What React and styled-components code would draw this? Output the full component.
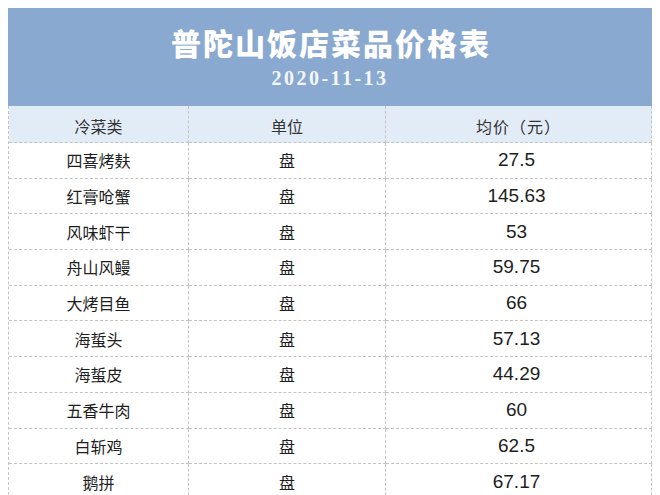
import styled, { createGlobalStyle } from "styled-components";

const GlobalStyle = createGlobalStyle`
  body {
    margin: 8px;
    background: #ffffff;
    font-family: "Noto Sans CJK SC", "Liberation Sans", sans-serif;
  }
`;

const Sheet = styled.section`
  width: 644px;
`;

const Banner = styled.header`
  height: 98px;
  background-color: #8aa9d0;
  display: flex;
  flex-direction: column;
  align-items: center;
  justify-content: flex-start;
  color: #ffffff;
  box-sizing: border-box;
  padding-top: 15px;
`;

const Title = styled.h1`
  margin: 0;
  font-family: "Noto Sans CJK SC", sans-serif;
  font-weight: 900;
  font-size: 30px;
  line-height: 38px;
  letter-spacing: 2px;
  padding-left: 2px;
`;

const DateLine = styled.div`
  margin-top: 4px;
  font-family: "Liberation Serif", serif;
  font-weight: bold;
  font-size: 20px;
  line-height: 26px;
  letter-spacing: 2.5px;
  color: #f4f7fb;
`;

const Grid = styled.div`
  display: grid;
  grid-template-columns: 180px 197px 1fr;
  border-left: 1px dashed #c4c4c4;
`;

const Cell = styled.div`
  box-sizing: border-box;
  height: ${(p) => (p.$head ? "37px" : "35.7px")};
  display: flex;
  align-items: center;
  justify-content: center;
  border-right: 1px dashed #c4c4c4;
  border-bottom: 1px dashed #c4c4c4;
  background-color: ${(p) => (p.$head ? "#e2ecf7" : "#ffffff")};
  color: ${(p) => (p.$head ? "#333333" : "#1e1e1e")};
  font-size: 16px;
  padding-top: ${(p) => (p.$head ? "3px" : "0")};
`;

const Price = styled(Cell)`
  font-family: "Liberation Sans", Arial, sans-serif;
  font-size: 19px;
  padding-right: 4px;
`;

const HeadPrice = styled(Cell)`
  letter-spacing: 1px;
`;

const dishes = [
  ["四喜烤麸", "27.5"],
  ["红膏呛蟹", "145.63"],
  ["风味虾干", "53"],
  ["舟山风鳗", "59.75"],
  ["大烤目鱼", "66"],
  ["海蜇头", "57.13"],
  ["海蜇皮", "44.29"],
  ["五香牛肉", "60"],
  ["白斩鸡", "62.5"],
  ["鹅拼", "67.17"],
];

export default function App() {
  return (
    <>
      <GlobalStyle />
      <Sheet>
        <Banner>
          <Title>普陀山饭店菜品价格表</Title>
          <DateLine>2020-11-13</DateLine>
        </Banner>
        <Grid>
          <Cell $head>冷菜类</Cell>
          <Cell $head>单位</Cell>
          <HeadPrice $head>均价（元）</HeadPrice>
          {dishes.map(([name, price]) => (
            <Row key={name} name={name} price={price} />
          ))}
        </Grid>
      </Sheet>
    </>
  );
}

function Row({ name, price }) {
  return (
    <>
      <Cell>{name}</Cell>
      <Cell>盘</Cell>
      <Price>{price}</Price>
    </>
  );
}
